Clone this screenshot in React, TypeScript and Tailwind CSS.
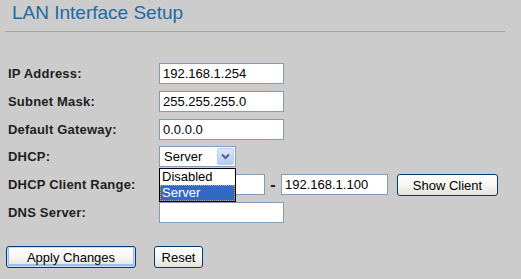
const field =
  "h-[21px] border border-[#7f9db9] bg-white px-[3px] text-[13px] text-[#000] outline-none";

const Row = ({ label, children, top }: { label: string; children: React.ReactNode; top: string }) => (
  <div className={`flex items-center h-[21px] ${top}`}>
    <div className="w-[159px] pl-[8px] text-[13px] font-bold text-[#1e1e1e] tracking-[0.2px]">{label}</div>
    {children}
  </div>
);

const XpButton = ({ label, width, focused }: { label: string; width: string; focused?: boolean }) => (
  <button
    className={`h-[22px] ${width} rounded-[3px] border border-[#003c74] bg-gradient-to-b from-[#ffffff] via-[#f6f6f3] to-[#e3e2da] text-[13px] text-[#000] leading-none ${
      focused ? "shadow-[inset_0_0_0_1px_#cddcf6,inset_0_-1px_0_2px_#9fbcec]" : ""
    }`}
  >
    {label}
  </button>
);

export default function App() {
  return (
    <div className="relative w-[521px] h-[279px] bg-[#cccccc] font-['Liberation_Sans',Arial,sans-serif] overflow-hidden">
      <div className="pt-[2px] pl-[12px] text-[19px] leading-[22px] text-[#1d6aa4]">LAN Interface Setup</div>
      <div className="mt-[7px] ml-[5px] w-[500px] h-px bg-[#a8a497]" />

      <div className="mt-[31px]">
        <Row label="IP Address:" top="">
          <input className={`${field} w-[125px]`} defaultValue="192.168.1.254" />
        </Row>
        <Row label="Subnet Mask:" top="mt-[7px]">
          <input className={`${field} w-[125px]`} defaultValue="255.255.255.0" />
        </Row>
        <Row label="Default Gateway:" top="mt-[7px]">
          <input className={`${field} w-[125px]`} defaultValue="0.0.0.0" />
        </Row>
        <Row label="DHCP:" top="mt-[6px]">
          <div className="flex items-center h-[21px] w-[77px] border border-[#7f9db9] bg-white">
            <span className="flex-1 pl-[4px] text-[13px] text-[#000]">Server</span>
            <span className="mr-px flex h-[17px] w-[17px] items-center justify-center rounded-[2px] border border-[#b9cbf3] bg-gradient-to-b from-[#dce7fd] to-[#b6cbf7]">
              <svg width="9" height="7" viewBox="0 0 9 7">
                <path d="M1 1.5 L4.5 5 L8 1.5" fill="none" stroke="#4d6185" strokeWidth="2" />
              </svg>
            </span>
          </div>
        </Row>
        <Row label="DHCP Client Range:" top="mt-[7px]">
          <input className={`${field} w-[106px]`} defaultValue="" />
          <span className="w-[16px] text-center text-[16px] leading-none font-bold text-[#1e1e1e]">-</span>
          <input className={`${field} w-[107px]`} defaultValue="192.168.1.100" />
          <div className="ml-[9px]">
            <XpButton label="Show Client" width="w-[101px]" />
          </div>
        </Row>
        <Row label="DNS Server:" top="mt-[7px]">
          <input className={`${field} w-[125px]`} defaultValue="" />
        </Row>
      </div>

      <div className="mt-[23px] ml-[6px] flex gap-[18px]">
        <XpButton label="Apply Changes" width="w-[130px]" focused />
        <XpButton label="Reset" width="w-[49px]" />
      </div>

      {/* open dropdown list of the DHCP select */}
      <div className="absolute left-[159px] top-[168px] w-[77px] border border-black bg-white text-[13px] leading-[16px]">
        <div className="h-[16px] pl-[2px] text-[#000]">Disabled</div>
        <div className="h-[16px] pl-[2px] bg-[#316ac5] text-white outline-1 outline-dotted outline-[#e0a050] -outline-offset-1">
          Server
        </div>
      </div>
    </div>
  );
}
